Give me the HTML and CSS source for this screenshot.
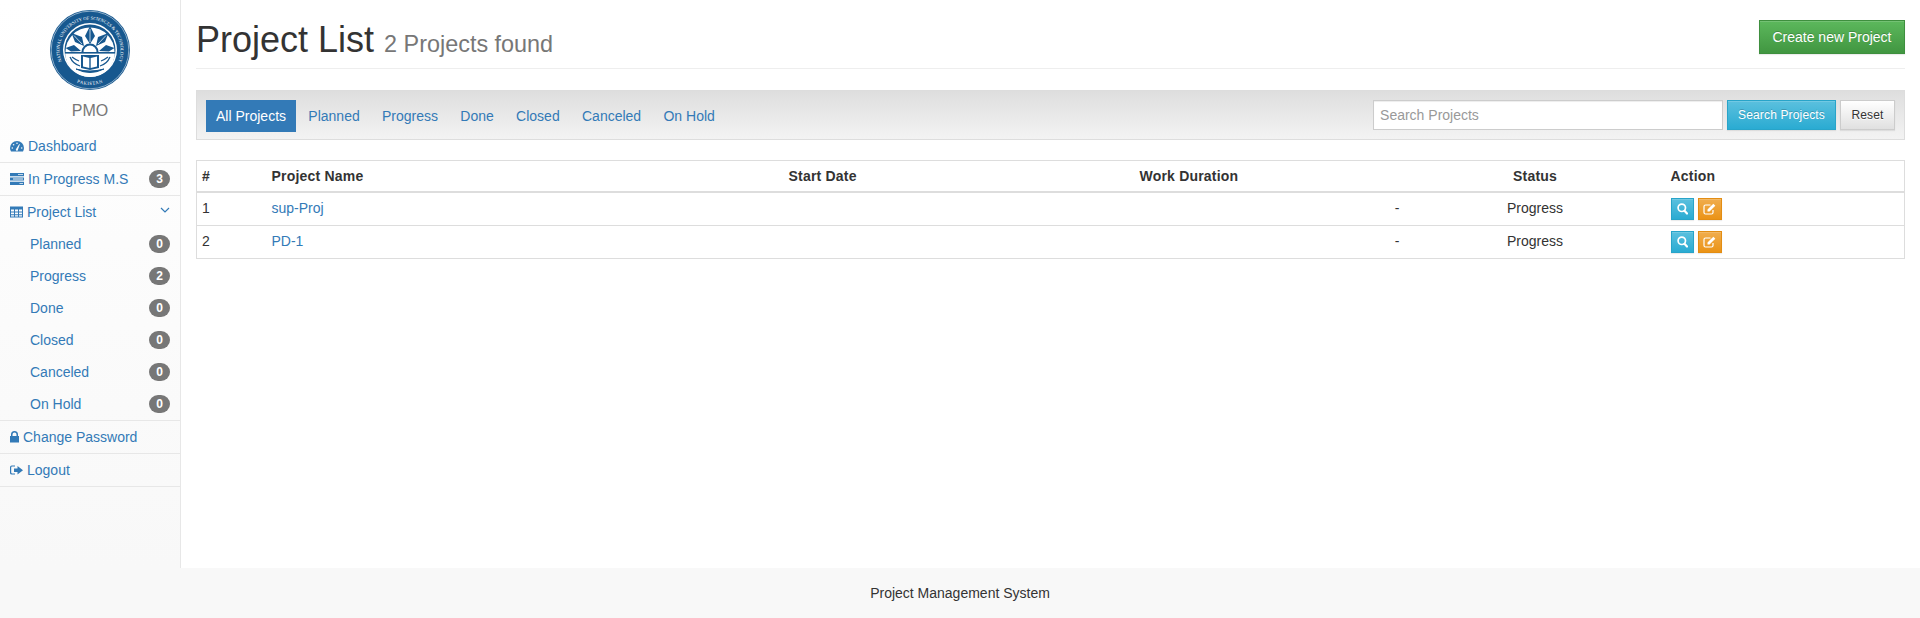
FILE: index.html
```html
<!DOCTYPE html>
<html>
<head>
<meta charset="UTF-8">
<meta name="viewport" content="width=device-width, initial-scale=1">
<title>Project List</title>
<link rel="stylesheet" href="styles.css">
</head>
<body>

<div class="wrapper">
	<div class="sidebar">
		<div class="logo">
			<svg width="80" height="80" viewBox="0 0 80 80">
				<defs>
					<path id="ringTop" d="M16.600 59.600 A30.500 30.500 0 1 1 63.400 59.600"/>
					<path id="ringBottom" d="M22.500 70.300 A35 35 0 0 0 57.500 70.300"/>
				</defs>
				<circle cx="40" cy="40" r="40" fill="#17588f"/>
				<circle cx="40" cy="40" r="38.800" fill="none" stroke="#fff" stroke-width=".5"/>
				<text class="seal-text"><textPath href="#ringTop" startOffset="50%" text-anchor="middle">NATIONAL UNIVERSITY OF SCIENCES &amp; TECHNOLOGY</textPath></text>
				<text class="seal-text seal-small"><textPath href="#ringBottom" startOffset="50%" text-anchor="middle">PAKISTAN</textPath></text>
				<circle cx="40" cy="40" r="27" fill="#fff"/>
				<circle cx="40" cy="40" r="25.500" fill="#17588f"/>
				<!-- rays -->
				<path d="M15.500 42 A24.500 24.500 0 0 1 64.500 42 Z" fill="#fff"/>
				<path d="M40 16 L45 26 L40 34 L35 26 Z M21.500 23 L32 27 L34 36 L25 32 Z M58.500 23 L48 27 L46 36 L55 32 Z M15.500 38 L24 35 L31 41 L21 41.500 Z M64.500 38 L56 35 L49 41 L59 41.500 Z" fill="#17588f"/>
				<path d="M40 19 V32 M24 25.500 L32 34 M56 25.500 L48 34" stroke="#fff" stroke-width=".7"/>
				<circle cx="40" cy="42" r="8.500" fill="#17588f"/>
				<circle cx="40" cy="42" r="6.500" fill="#fff"/>
				<!-- lower half with the book -->
				<path d="M15 42 H65 A25 25 0 0 1 15 42 Z" fill="#fff"/>
				<rect x="15" y="42" width="50" height="1.600" fill="#17588f"/>
				<path d="M31 45 H49 V58 L40 60 L31 58 Z" fill="#17588f"/>
				<path d="M33 46.500 L39.300 48 V58 L33 56.500 Z M47 46.500 L40.700 48 V58 L47 56.500 Z" fill="#fff"/>
				<path d="M20 47 Q23 54 30 56 M22 47 Q26 50 29 51 M60 47 Q57 54 50 56 M58 47 Q54 50 51 51" fill="none" stroke="#17588f" stroke-width="1.300"/>
				<path d="M26 59 Q40 66 54 59 Q40 63 26 59 Z" fill="#17588f" stroke="#17588f"/>
			</svg>
		</div>
		<div class="brand">PMO</div>
		<ul class="side-menu">
			<li class="side-item">
				<a class="side-link" href="#">
					<svg width="14" height="14" viewBox="0 0 14 14"><path fill="#337ab7" d="M7 2A7 7 0 0 1 14 9c0 1.300-.4 2.500-1 3.500H1C.4 11.500 0 10.300 0 9A7 7 0 0 1 7 2z"/><path fill="#f8f8f8" d="M6.200 9.800 9.300 5l.6.300-1.900 5.100a1.100 1.100 0 1 1-1.800-.6z"/><circle cx="2.300" cy="9" r=".8" fill="#f8f8f8"/><circle cx="3.600" cy="5.700" r=".8" fill="#f8f8f8"/><circle cx="7" cy="4.200" r=".8" fill="#f8f8f8"/><circle cx="11.700" cy="9" r=".8" fill="#f8f8f8"/></svg>
					<span>Dashboard</span>
				</a>
			</li>
			<li class="side-item">
				<a class="side-link" href="#">
					<svg width="14" height="14" viewBox="0 0 14 14"><path fill="#337ab7" d="M0 1h14v3.200H0zM0 5.400h14v3.200H0zM0 9.800h14v3.200H0z"/><path fill="#f8f8f8" d="M8 2.200h5V3H8zM3 6.600h10v.8H3zM9.500 11H13v.8H9.500z"/></svg>
					<span>In Progress M.S</span>
					<span class="badge">3</span>
				</a>
			</li>
			<li class="side-item">
				<a class="side-link" href="#">
					<svg width="13" height="14" viewBox="0 0 13 14"><path fill="#337ab7" fill-rule="evenodd" d="M0 1.500h13v11H0zM1 4.500v2h3v-2zM5 4.500v2h3v-2zM9 4.500v2h3v-2zM1 7.500v1.800h3V7.500zM5 7.500v1.800h3V7.500zM9 7.500v1.800h3V7.500zM1 10.200v1.400h3v-1.400zM5 10.200v1.400h3v-1.400zM9 10.200v1.400h3v-1.400z"/></svg>
					<span>Project List</span>
					<svg class="chevron" width="10" height="6" viewBox="0 0 10 6"><path d="M1 1l4 4 4-4" fill="none" stroke="#337ab7" stroke-width="1.200"/></svg>
				</a>
				<ul class="sub-menu">
					<li><a class="sub-link" href="#"><span>Planned</span><span class="badge">0</span></a></li>
					<li><a class="sub-link" href="#"><span>Progress</span><span class="badge">2</span></a></li>
					<li><a class="sub-link" href="#"><span>Done</span><span class="badge">0</span></a></li>
					<li><a class="sub-link" href="#"><span>Closed</span><span class="badge">0</span></a></li>
					<li><a class="sub-link" href="#"><span>Canceled</span><span class="badge">0</span></a></li>
					<li><a class="sub-link" href="#"><span>On Hold</span><span class="badge">0</span></a></li>
				</ul>
			</li>
			<li class="side-item">
				<a class="side-link" href="#">
					<svg width="9" height="14" viewBox="0 0 9 14"><path fill="#337ab7" fill-rule="evenodd" d="M0 6h1V4.500a3.500 3.500 0 0 1 7 0V6h1v6.500H0zM2.500 6h4V4.500a2 2 0 0 0-4 0z"/></svg>
					<span>Change Password</span>
				</a>
			</li>
			<li class="side-item">
				<a class="side-link" href="#">
					<svg width="13" height="14" viewBox="0 0 13 14"><path fill="#337ab7" d="M0 4.200A1.800 1.800 0 0 1 1.800 2.400H5v1.200H2a.8.800 0 0 0-.8.800v5.200a.8.800 0 0 0 .8.800h3v1.200H1.800A1.800 1.800 0 0 1 0 10.200z"/><path fill="#337ab7" d="M4 5.500h3.500V3L13 7.300l-5.500 4.300V9H4z"/></svg>
					<span>Logout</span>
				</a>
			</li>
		</ul>
	</div>

	<div class="main">
		<div class="page-header">
			<h1>Project List <small>2 Projects found</small></h1>
			<a class="btn btn-success btn-create" href="#">Create new Project</a>
		</div>

		<div class="toolbar">
			<ul class="pills">
				<li><a class="active" href="#">All Projects</a></li>
				<li><a href="#">Planned</a></li>
				<li><a href="#">Progress</a></li>
				<li><a href="#">Done</a></li>
				<li><a href="#">Closed</a></li>
				<li><a href="#">Canceled</a></li>
				<li><a href="#">On Hold</a></li>
			</ul>
			<form class="search-form">
				<input class="search-input" type="text" placeholder="Search Projects">
				<button class="btn btn-info btn-search" type="button">Search Projects</button>
				<button class="btn btn-default btn-search btn-reset" type="button">Reset</button>
			</form>
		</div>

		<table class="project-table">
			<thead>
				<tr>
					<th class="col-num">#</th>
					<th class="col-name">Project Name</th>
					<th class="col-start">Start Date</th>
					<th class="col-duration">Work Duration</th>
					<th class="col-status">Status</th>
					<th>Action</th>
				</tr>
			</thead>
			<tbody>
				<tr>
					<td>1</td>
					<td><a href="#">sup-Proj</a></td>
					<td></td>
					<td class="cell-right">-</td>
					<td class="col-status">Progress</td>
					<td class="cell-actions">
						<a class="btn btn-info btn-xs" href="#"><svg width="11" height="12" viewBox="0 0 11 12"><circle cx="4.800" cy="4.800" r="3.700" fill="none" stroke="#fff" stroke-width="1.700"/><path d="M7.500 7.800l2.500 2.700" stroke="#fff" stroke-width="2.200" stroke-linecap="round"/></svg></a>
						<a class="btn btn-warning btn-xs btn-edit" href="#"><svg width="13" height="12" viewBox="0 0 13 12"><path d="M7.500 2H2.500A1.500 1.500 0 0 0 1 3.500v6A1.500 1.500 0 0 0 2.500 11h6A1.500 1.500 0 0 0 10 9.500V7" fill="none" stroke="#fff" stroke-width="1.200"/><path d="M4.500 8.500V6.500L10.300.7l2 2L6.500 8.500z" fill="#fff"/></svg></a>
					</td>
				</tr>
				<tr>
					<td>2</td>
					<td><a href="#">PD-1</a></td>
					<td></td>
					<td class="cell-right">-</td>
					<td class="col-status">Progress</td>
					<td class="cell-actions">
						<a class="btn btn-info btn-xs" href="#"><svg width="11" height="12" viewBox="0 0 11 12"><circle cx="4.800" cy="4.800" r="3.700" fill="none" stroke="#fff" stroke-width="1.700"/><path d="M7.500 7.800l2.500 2.700" stroke="#fff" stroke-width="2.200" stroke-linecap="round"/></svg></a>
						<a class="btn btn-warning btn-xs btn-edit" href="#"><svg width="13" height="12" viewBox="0 0 13 12"><path d="M7.500 2H2.500A1.500 1.500 0 0 0 1 3.500v6A1.500 1.500 0 0 0 2.500 11h6A1.500 1.500 0 0 0 10 9.500V7" fill="none" stroke="#fff" stroke-width="1.200"/><path d="M4.500 8.500V6.500L10.300.7l2 2L6.500 8.500z" fill="#fff"/></svg></a>
					</td>
				</tr>
			</tbody>
		</table>
	</div>
</div>

<div class="footer">Project Management System</div>

</body>
</html>
```

FILE: styles.css
```css
* {
	box-sizing: border-box;
}

body {
	margin: 0;
	font-family: "Liberation Sans", Arial, sans-serif;
	font-size: 14px;
	line-height: 20px;
	color: #333;
	background-color: #fff;
}

a {
	color: #337ab7;
	text-decoration: none;
}

ul {
	list-style-type: none;
	margin: 0;
	padding: 0;
}

.wrapper {
	display: flex;
	height: 568px;
}

/* sidebar */
.sidebar {
	width: 181px;
	flex-shrink: 0;
	border-right: 1px solid #e7e7e7;
	background: linear-gradient(to bottom, #fff 0, #f8f8f8 100%);
}

.logo {
	display: flex;
	justify-content: center;
	padding-top: 10px;
	height: 90px;
}

.seal-text {
	font-family: "Liberation Serif", serif;
	font-size: 4.600px;
	fill: #fff;
}

.seal-small {
	font-size: 4.800px;
	letter-spacing: .5px;
}

.brand {
	height: 40px;
	text-align: center;
	font-size: 16px;
	line-height: 42px;
	color: #777;
}

.side-item {
	border-bottom: 1px solid #e7e7e7;
}

.side-link {
	display: flex;
	align-items: center;
	gap: 4px;
	height: 32px;
	padding: 0 10px;
}

.badge {
	margin-left: auto;
	min-width: 21px;
	height: 18px;
	padding: 3px 7px;
	border-radius: 10px;
	background-color: #777;
	color: #fff;
	font-size: 12px;
	font-weight: bold;
	line-height: 12px;
	text-align: center;
}

.chevron {
	margin-left: auto;
	position: relative;
	top: -2px;
}

.sub-link {
	display: flex;
	align-items: center;
	height: 32px;
	padding: 0 10px 0 30px;
}

/* main part */
.main {
	flex: 1;
	min-width: 0;
	padding: 0 15px;
}

.page-header {
	display: flex;
	justify-content: space-between;
	align-items: flex-start;
	height: 69px;
	padding-top: 20px;
	margin-bottom: 21px;
	border-bottom: 1px solid #eee;
}

h1 {
	margin: 0;
	font-size: 36px;
	font-weight: 500;
	line-height: 39.600px;
}

h1 small {
	font-size: 65%;
	font-weight: normal;
	line-height: 1;
	color: #777;
}

.btn {
	display: inline-block;
	border: 1px solid transparent;
	color: #fff;
	text-shadow: 0 -1px 0 rgba(0, 0, 0, .2);
	box-shadow: inset 0 1px 0 rgba(255, 255, 255, .15), 0 1px 1px rgba(0, 0, 0, .075);
	font-family: inherit;
	text-align: center;
	cursor: pointer;
}

.btn-create {
	padding: 6px 12.500px;
	font-size: 14px;
	line-height: 20px;
}

.btn-success {
	background: linear-gradient(to bottom, #5cb85c 0, #419641 100%);
	border-color: #3e8f3e;
}

.btn-info {
	background: linear-gradient(to bottom, #5bc0de 0, #2aabd2 100%);
	border-color: #28a4c9;
}

.btn-warning {
	background: linear-gradient(to bottom, #f0ad4e 0, #eb9316 100%);
	border-color: #e38d13;
}

.btn-default {
	background: linear-gradient(to bottom, #fff 0, #e0e0e0 100%);
	border-color: #ccc;
	color: #333;
	text-shadow: 0 1px 0 #fff;
}

.toolbar {
	display: flex;
	justify-content: space-between;
	align-items: flex-start;
	height: 50px;
	padding: 9px 9px 0;
	margin-bottom: 20px;
	border: 1px solid #ddd;
	background: linear-gradient(to bottom, #dedede 0, #f3f3f3 100%);
}

.pills {
	display: flex;
	gap: 2.300px;
}

.pills a {
	display: block;
	padding: 6px 10px;
}

.pills a.active {
	background-color: #337ab7;
	color: #fff;
}

.search-form {
	display: flex;
	gap: 4px;
}

.search-input {
	width: 350px;
	height: 30px;
	padding: 6px;
	border: 1px solid #ccc;
	background-color: #fff;
	font-family: inherit;
	font-size: 14px;
	color: #555;
	box-shadow: inset 0 1px 1px rgba(0, 0, 0, .075);
}

.search-input::placeholder {
	color: #999;
}

.btn-search {
	height: 30px;
	padding: 0 10px;
	font-size: 12px;
	letter-spacing: .15px;
}

.btn-reset {
	width: 55px;
}

.project-table {
	width: 100%;
	table-layout: fixed;
	border-collapse: collapse;
	border: 1px solid #ddd;
}

.project-table th,
.project-table td {
	padding: 5px;
	height: 32px;
	text-align: left;
	vertical-align: top;
	border-top: 1px solid #ddd;
}

.project-table th {
	height: 31px;
	font-weight: bold;
	letter-spacing: .2px;
	border-top: 0;
	border-bottom: 2px solid #ddd;
}

.col-num {
	width: 70px;
}

.col-name {
	width: 517px;
}

.col-start {
	width: 351px;
}

.col-duration {
	width: 270px;
}

.col-status {
	width: 261px;
	text-align: center !important;
}

.cell-right {
	text-align: right !important;
}

.cell-actions {
	font-size: 0;
}

.btn-xs {
	height: 22px;
	padding: 4px 5px;
	margin-right: 4px;
	line-height: 12px;
	vertical-align: top;
}

.btn-edit {
	padding: 4px 4.500px;
}

.btn-xs svg {
	display: block;
}

.footer {
	height: 50px;
	background-color: #f8f8f8;
	text-align: center;
	line-height: 50px;
}
```
